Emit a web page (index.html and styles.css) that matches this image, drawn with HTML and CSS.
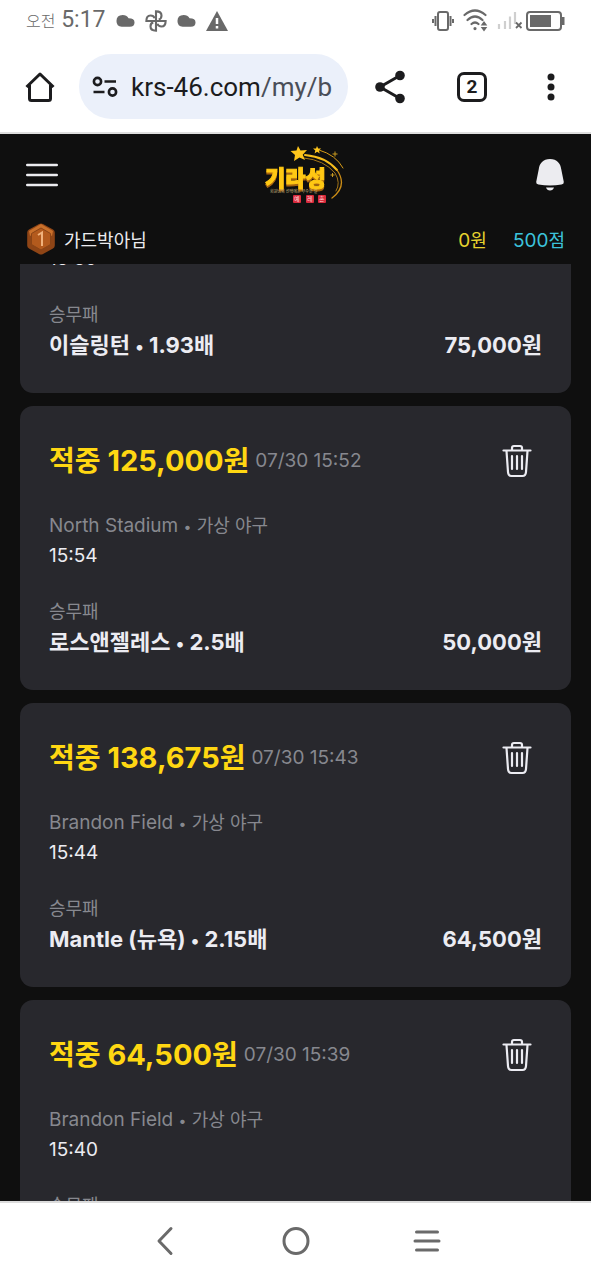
FILE: index.html
```
<!DOCTYPE html>
<html lang="ko">
<head>
<meta charset="utf-8">
<meta name="viewport" content="width=device-width, initial-scale=1">
<title>기라성</title>
<link rel="stylesheet" href="styles.css">
</head>
<body>
<svg class="defs" aria-hidden="true">
  <symbol id="trash" viewBox="0 0 30 34">
    <g fill="none" stroke="currentColor" stroke-width="2.200" stroke-linecap="round" stroke-linejoin="round">
      <path d="M1.500 6.500h27"/>
      <path d="M10 6V4q0-2 2-2h6q2 0 2 2v2"/>
      <path d="M4.500 7l1.500 21q.3 4 3.500 4h11q3.200 0 3.500-4L25.500 7"/>
      <path d="M10 12v13M15 12v13M20 12v13"/>
    </g>
  </symbol>
  <symbol id="cloud" viewBox="0 0 20 14">
    <path fill="currentColor" d="M6 13Q.5 13 .5 7T7 .8q4.200 0 6.200 3.400 6.300 0 6.300 4.400T14.500 13z"/>
  </symbol>
</svg>
<div class="screen">
  <div class="status">
    <div class="status-group">
      <span class="clock"><small>오전</small> 5:17</span>
      <svg width="19" height="14"><use href="#cloud"/></svg>
      <svg width="22" height="22" viewBox="0 0 24 24" fill="none" stroke="currentColor" stroke-width="2.300"><path d="M12 12V1.500q6 0 6 4.500 0 3.500-3 4.500M12 12h10.500q0 6-4.500 6-3.500 0-4.500-3M12 12v10.500q-6 0-6-4.500 0-3.500 3-4.500M12 12H1.500q0-6 4.500-6 3.500 0 4.500 3"/></svg>
      <svg width="19" height="14"><use href="#cloud"/></svg>
      <svg width="22" height="20" viewBox="0 0 22 20"><path fill="currentColor" d="M11 0l11 20H0z"/><path stroke="#fff" stroke-width="2.500" d="M11 7v6M11 15v2.500"/></svg>
    </div>
    <div class="status-group status-right">
      <svg width="22" height="20" viewBox="0 0 22 20" fill="none" stroke="currentColor" stroke-width="2"><rect x="6" y="1" width="10" height="18" rx="2"/><path d="M3.500 5v10M1 8v4M18.500 5v10M21 8v4"/></svg>
      <svg width="25" height="23" viewBox="0 0 25 23" fill="none" stroke="currentColor" stroke-width="2.200" stroke-linecap="round"><path d="M1.500 6q10.500-9 21 0M4.500 11q7.500-7 15 0M8.500 15q3.500-3 7 0"/><path fill="currentColor" stroke="none" d="M12 18a1.600 1.600 0 1 1 0 3.200 1.600 1.600 0 0 1 0-3.200zM21 12l3.300 4.500h-6.600zM21 22.500l3.300-4.500h-6.600z"/></svg>
      <svg width="26" height="20" viewBox="0 0 26 20" fill="none"><path stroke="#cfcfcf" stroke-width="2.200" d="M2 13v5M8 10v8M13 5.500V18M18 1v12"/><path stroke="currentColor" stroke-width="1.800" d="M19 11.500l5.500 5.500M24.500 11.500L19 17"/></svg>
      <svg class="battery" width="39" height="20" viewBox="0 0 39 20"><rect x="1" y="1" width="34" height="18" rx="3" fill="none" stroke="currentColor" stroke-width="2"/><path fill="currentColor" d="M4 4h21v12H4zM36 6h2.500v8H36z"/></svg>
    </div>
  </div>
  <div class="toolbar">
    <button class="icon-btn" aria-label="홈"><svg width="30" height="32" viewBox="0 0 30 32" fill="none" stroke="currentColor" stroke-width="3" stroke-linejoin="round"><path d="M1.500 16L15 3l13.500 13M4.500 14v13.500q0 2 2 2h17q2 0 2-2V14"/></svg></button>
    <div class="address">
      <svg width="26" height="22" viewBox="0 0 26 22" fill="none" stroke="currentColor" stroke-width="2.600"><circle cx="5.500" cy="5.500" r="3.600"/><path d="M12.500 5.500H24M1.500 16H12.500"/><circle cx="20.500" cy="16" r="3.600"/></svg>
      <span class="url">krs-46.com<span class="path">/my/b</span></span>
    </div>
    <button class="icon-btn share" aria-label="공유"><svg width="30" height="34" viewBox="0 0 30 34"><path fill="none" stroke="currentColor" stroke-width="3" d="M25 5.500L5 17l20 11.500"/><g fill="currentColor"><circle cx="25" cy="5.500" r="4.800"/><circle cx="5" cy="17" r="4.800"/><circle cx="25" cy="28.500" r="4.800"/></g></svg></button>
    <button class="tabs" aria-label="탭">2</button>
    <button class="icon-btn" aria-label="더보기"><svg width="8" height="28" viewBox="0 0 8 28" fill="currentColor"><circle cx="4" cy="4" r="3.500"/><circle cx="4" cy="14" r="3.500"/><circle cx="4" cy="24" r="3.500"/></svg></button>
  </div>
  <header class="site">
    <div class="site-bar">
      <button class="icon-btn" aria-label="메뉴"><svg width="32" height="24" viewBox="0 0 32 24" stroke="currentColor" stroke-width="2.400" stroke-linecap="round"><path d="M1.200 2h29.600M1.200 12h29.600M1.200 22h29.600"/></svg></button>
      <a href="#" class="logo" aria-label="기라성"><svg width="84" height="63" viewBox="0 0 84 63">
        <g fill="none" stroke-linecap="round">
          <path stroke="#f6bd1c" stroke-width="2" d="M43 12Q64 14 75 27"/>
          <path stroke="#c98b16" stroke-width="1.300" d="M75 27Q86 43 70 55"/>
          <path stroke="#a47518" stroke-width="1" d="M42 15Q62 17 73 30q6 10 1 18"/>
          <path stroke="#d69b18" stroke-width="1" d="M57 7Q74 12 81 25"/>
        </g>
        <path fill="#ffc61c" d="M36 3l2.500 4.500 6.500-.5-4.300 4.700 2.300 5.300-5.500-2.500-5.500 3.500 1-6-4.500-4 6-.5zM55 3l1.200 2.500 3 .1-2.300 1.900.9 2.900-2.700-1.600-2.500 1.700.7-3-2.300-2 3-.1z"/>
        <path stroke="#c99a20" stroke-width="1" d="M73 8.500v5M70.500 11h5M70.500 30v4M68.500 32h4"/>
        <text class="logo-name" x="3" y="43">기라성</text>
        <text class="logo-line" x="8" y="50">회원님의 선택에는 우수한 길</text>
        <g fill="#d92b3c"><rect x="31" y="52" width="8" height="8" rx="1"/><rect x="44" y="52" width="8" height="8" rx="1"/><rect x="56" y="52" width="8" height="8" rx="1"/></g>
        <g class="logo-seal"><text x="32" y="58">예</text><text x="45" y="58">레</text><text x="57" y="58">혼</text></g>
      </svg></a>
      <button class="icon-btn" aria-label="알림"><svg width="30" height="34" viewBox="0 0 30 34" fill="currentColor"><path d="M15 1C8 1 4.500 5.500 3.800 11L1.200 24Q1 26 3.500 26.500q11.500 2 23 0 2.500-.5 2.300-2.500L26.200 11C25.500 5.500 22 1 15 1zM11 29.500h8q-1 3-4 3t-4-3z"/></svg></button>
    </div>
    <div class="user">
      <svg width="30" height="32" viewBox="0 0 30 32"><path fill="#8f4516" d="M15 .5q1 0 2 .6l10 5.500q1.800 1 1.800 3v12.800q0 2-1.800 3l-10 5.500q-2 1.200-4 0L3 25.400q-1.800-1-1.800-3V9.600q0-2 1.800-3l10-5.500q1-.6 2-.6z"/><path fill="#c9702b" d="M15 1l12 7-1 5L15 6 4 13 3 8z"/><path fill="#b35a1d" stroke="#8a4416" d="M15 5l9.500 5.500v11L15 27l-9.500-5.500v-11z"/><path fill="none" stroke="#f0b27c" stroke-width="2" d="M12 12l4-2.500V23"/></svg>
      <span class="name">가드박아님</span>
      <span class="money">0<span class="ko">원</span></span>
      <span class="points">500<span class="ko">점</span></span>
    </div>
  </header>
  <main class="bets">
    <article class="card card-first">
      <time class="start">15:59</time>
      <div class="market">승무패</div>
      <div class="pick"><span><span class="ko">이슬링턴</span> <span class="dot">•</span> 1.93<span class="ko">배</span></span><span>75,000<span class="ko">원</span></span></div>
    </article>
    <article class="card">
      <div class="head"><h2><span class="ko">적중</span> 125,000<span class="ko">원</span></h2><time>07/30 15:52</time><button class="icon-btn" aria-label="삭제"><svg width="30" height="34"><use href="#trash"/></svg></button></div>
      <div class="venue">North Stadium <span class="dot">•</span> <span class="ko">가상 야구</span></div>
      <time class="start">15:54</time>
      <div class="market">승무패</div>
      <div class="pick"><span><span class="ko">로스앤젤레스</span> <span class="dot">•</span> 2.5<span class="ko">배</span></span><span>50,000<span class="ko">원</span></span></div>
    </article>
    <article class="card">
      <div class="head"><h2><span class="ko">적중</span> 138,675<span class="ko">원</span></h2><time>07/30 15:43</time><button class="icon-btn" aria-label="삭제"><svg width="30" height="34"><use href="#trash"/></svg></button></div>
      <div class="venue">Brandon Field <span class="dot">•</span> <span class="ko">가상 야구</span></div>
      <time class="start">15:44</time>
      <div class="market">승무패</div>
      <div class="pick"><span>Mantle (<span class="ko">뉴욕</span>) <span class="dot">•</span> 2.15<span class="ko">배</span></span><span>64,500<span class="ko">원</span></span></div>
    </article>
    <article class="card">
      <div class="head"><h2><span class="ko">적중</span> 64,500<span class="ko">원</span></h2><time>07/30 15:39</time><button class="icon-btn" aria-label="삭제"><svg width="30" height="34"><use href="#trash"/></svg></button></div>
      <div class="venue">Brandon Field <span class="dot">•</span> <span class="ko">가상 야구</span></div>
      <time class="start">15:40</time>
      <div class="market">승무패</div>
    </article>
  </main>
  <nav class="system">
    <button class="icon-btn" aria-label="뒤로"><svg width="28" height="30" viewBox="0 0 28 30" fill="none" stroke="currentColor" stroke-width="3" stroke-linecap="round" stroke-linejoin="round"><path d="M20 2.500L8 15l12 12.500"/></svg></button>
    <button class="icon-btn" aria-label="홈 화면"><svg width="28" height="30" viewBox="0 0 28 30" fill="none" stroke="currentColor" stroke-width="3"><ellipse cx="14" cy="15" rx="12" ry="12.500"/></svg></button>
    <button class="icon-btn" aria-label="최근 앱"><svg width="28" height="24" viewBox="0 0 28 24" stroke="currentColor" stroke-width="3" stroke-linecap="round"><path d="M3.500 3h21M2 12h24M3.500 21h21"/></svg></button>
  </nav>
</div>
</body>
</html>
```
FILE: styles.css
```
* { box-sizing: border-box; }
body {
  margin: 0;
  background: #0f0f0f;
  font-family: Inter, "Noto Sans CJK KR", sans-serif;
}
button {
  border: 0;
  padding: 0;
  background: none;
  color: inherit;
  font: inherit;
}
svg { display: block; flex: none; }
.defs { position: absolute; width: 0; height: 0; }
.icon-btn { display: flex; }

.screen {
  display: flex;
  flex-direction: column;
  height: 100vh;
  overflow: hidden;
}

/* phone status bar */
.status {
  display: flex;
  justify-content: space-between;
  align-items: center;
  height: 41px;
  padding: 0 26px;
  background: #fff;
  color: #696969;
  font-family: Roboto, "Noto Sans CJK KR", sans-serif;
}
.status-group { display: flex; align-items: center; gap: 10px; }
.status-right { gap: 9px; }
.battery { margin-left: -6px; }
.clock { font-size: 23px; line-height: 40px; }
.clock small { font-size: 16px; font-weight: 300; }

/* browser toolbar */
.toolbar {
  display: flex;
  align-items: center;
  height: 93px;
  padding: 0 36px 0 25px;
  border-bottom: 2px solid #dedede;
  background: #fff;
  color: #1c1c1e;
}
.address {
  flex: 1;
  display: flex;
  align-items: center;
  gap: 13px;
  height: 65px;
  margin: 0 27px 0 24px;
  padding: 0 13px;
  border-radius: 33px;
  background: #ebf0fa;
}
.url { font: 26px/32px Roboto, sans-serif; white-space: nowrap; }
.path { color: #4a4e58; }
.share { margin-right: 52px; }
.tabs {
  width: 30px;
  height: 30px;
  margin-right: 60px;
  border: 3px solid #1c1c1e;
  border-radius: 7px;
  font: bold 19px/24px Roboto, sans-serif;
}

/* site header */
.site { flex: none; color: #ececf0; }
.site-bar {
  display: flex;
  justify-content: space-between;
  align-items: center;
  height: 81px;
  padding: 0 26px;
}
.logo { margin-left: 14px; }
.logo-name {
  font: 900 22px "Noto Sans CJK KR", sans-serif;
  fill: #ffc814;
  stroke: #ffc814;
  stroke-width: 1px;
  filter: drop-shadow(0 2px 0 #a8640f);
}
.logo-line { font: 4px "Noto Sans CJK KR", sans-serif; fill: #d6c088; }
.logo-seal { font: 6px "Noto Sans CJK KR", sans-serif; fill: #ffd9dc; }
.user {
  display: flex;
  align-items: center;
  height: 49px;
  padding: 0 26px 1px;
  font-size: 19px;
}
.name { margin-left: 8px; font-size: 18px; }
.money { margin-left: auto; color: #e6d22e; }
.points { margin-left: 26px; color: #3cc3dc; }

/* bet list */
.bets {
  flex: 1;
  display: flex;
  flex-direction: column;
  gap: 13px;
  min-height: 0;
  padding: 0 20px;
  overflow: hidden;
  color: #ececf2;
}
.card {
  flex: none;
  padding: 35px 29px 32px;
  border-radius: 13px;
  background: #28282d;
  font-size: 19px;
  line-height: 30px;
}
.card-first { margin-top: -20px; padding-top: 0; }
.head {
  display: flex;
  align-items: center;
  height: 40px;
  margin-bottom: 30px;
  color: #87888f;
}
.head h2 {
  margin: 0 6px 0 0;
  color: #ffd712;
  font-size: 29px;
  font-weight: 700;
  line-height: 40px;
}
.head .icon-btn { margin: 0 10px 0 auto; color: #ececf2; }
.ko { font-size: 18px; }
.dot { font-size: 14px; }
.head .ko { font-size: 28px; }
.venue { height: 30px; color: #87888f; }
.start { display: block; height: 30px; }
.market {
  height: 29px;
  margin-top: 26px;
  color: #87888f;
  font-size: 18px;
}
.pick {
  display: flex;
  justify-content: space-between;
  height: 32px;
  font-size: 22px;
  font-weight: 700;
  line-height: 32px;
}
.pick .ko { font-size: 22px; }
.pick .dot { font-size: 18px; }

/* phone navigation */
.system {
  flex: none;
  display: flex;
  justify-content: center;
  align-items: center;
  gap: 103px;
  height: 79px;
  padding-bottom: 2px;
  border-top: 2px solid #dcdcdc;
  background: #fff;
  color: #6a6a6a;
}
```
